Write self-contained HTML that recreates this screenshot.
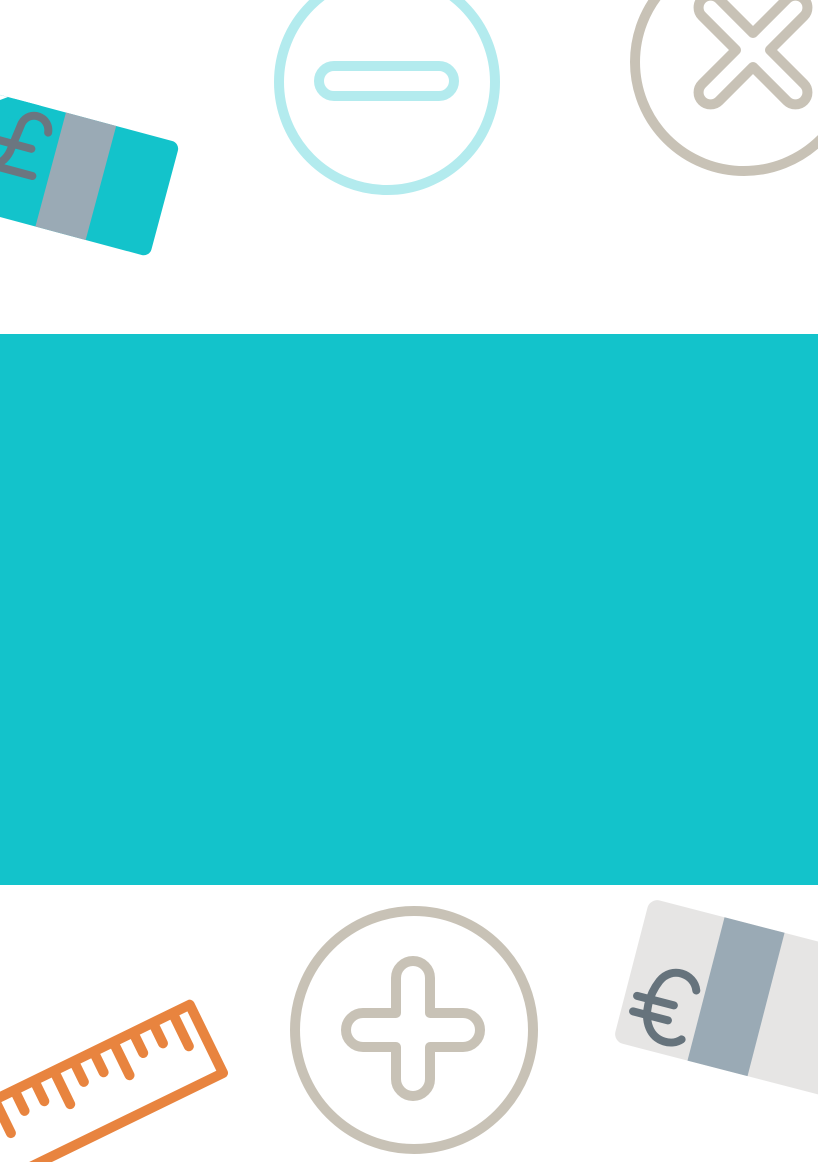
<!DOCTYPE html>
<html><head><style>html,body{margin:0;padding:0;background:#fff;width:818px;height:1162px;overflow:hidden}</style></head>
<body>
<svg width="818" height="1162" viewBox="0 0 818 1162" xmlns="http://www.w3.org/2000/svg">
<!-- pound card -->
<g transform="translate(8,97) rotate(15)">
<rect x="-40" y="0" width="218" height="118" rx="8" fill="#13c3cb"/>
<rect x="0" y="0" width="40" height="20" rx="8" fill="#13c3cb"/>
<rect x="60" y="0" width="52" height="118" fill="#9aaab5"/>
<g fill="none" stroke="#6b7680" stroke-width="8" stroke-linecap="round" stroke-linejoin="round" transform="translate(8,6)">
<path d="M40 18 C38 2 16 0 12 16 L8 46 C6 56 0 62 -6 64 L36 64"/>
<path d="M-8 38 L28 38"/>
</g>
</g>
<path d="M0 100 L0 95 L8 97 Z" fill="#fff"/>
<!-- minus circle -->
<circle cx="387" cy="82" r="108" fill="none" stroke="#b3ebee" stroke-width="10"/>
<rect x="319" y="66" width="135" height="30" rx="15" fill="none" stroke="#b3ebee" stroke-width="10"/>
<!-- x circle -->
<circle cx="744" cy="62" r="109" fill="none" stroke="#c8c2b6" stroke-width="10"/>
<g transform="translate(753,50) rotate(45)" fill="none" stroke="#c8c2b6" stroke-width="10" stroke-linejoin="round">
<path d="M-12 -60 a12 12 0 0 1 24 0 V-12 H60 a12 12 0 0 1 0 24 H12 V60 a12 12 0 0 1 -24 0 V12 H-60 a12 12 0 0 1 0 -24 H-12 Z"/>
</g>
<!-- teal band -->
<rect x="0" y="334" width="818" height="551" fill="#13c3cb"/>
<!-- plus circle -->
<circle cx="414" cy="1030" r="119" fill="none" stroke="#c8c2b6" stroke-width="10"/>
<path d="M396 978 a17 17 0 0 1 34 0 V1013 H463 a17 17 0 0 1 0 34 H430 V1079 a17 17 0 0 1 -34 0 V1047 H363 a17 17 0 0 1 0 -34 H396 Z" fill="none" stroke="#c8c2b6" stroke-width="10" stroke-linejoin="round"/>
<!-- euro card -->
<g transform="translate(650,898) rotate(14.5)">
<rect x="0" y="0" width="260" height="148" rx="10" fill="#e6e5e4"/>
<rect x="77" y="0" width="62" height="148" fill="#9aaab5"/>
<g fill="none" stroke="#66737c" stroke-width="8" stroke-linecap="round" transform="translate(8,2)">
<path d="M60 76 C54 60 30 58 22 76 C15 92 15 112 24 124 C33 136 50 136 58 127"/>
<path d="M4 96 L42 96"/><path d="M4 112 L40 112"/>
</g>
</g>
<!-- ruler -->
<g transform="translate(192,998) rotate(-26)" fill="none" stroke="#e8843f" stroke-width="10" stroke-linecap="round" stroke-linejoin="round">
<rect x="-320" y="5" width="315" height="76"/>
<path d="M-24 8 V42 M-46 8 V28 M-68 8 V28 M-90 8 V42 M-112 8 V28 M-134 8 V28 M-156 8 V42 M-178 8 V28 M-200 8 V28 M-222 8 V42 M-244 8 V28 M-266 8 V28"/>
</g>
</svg>
</body></html>
